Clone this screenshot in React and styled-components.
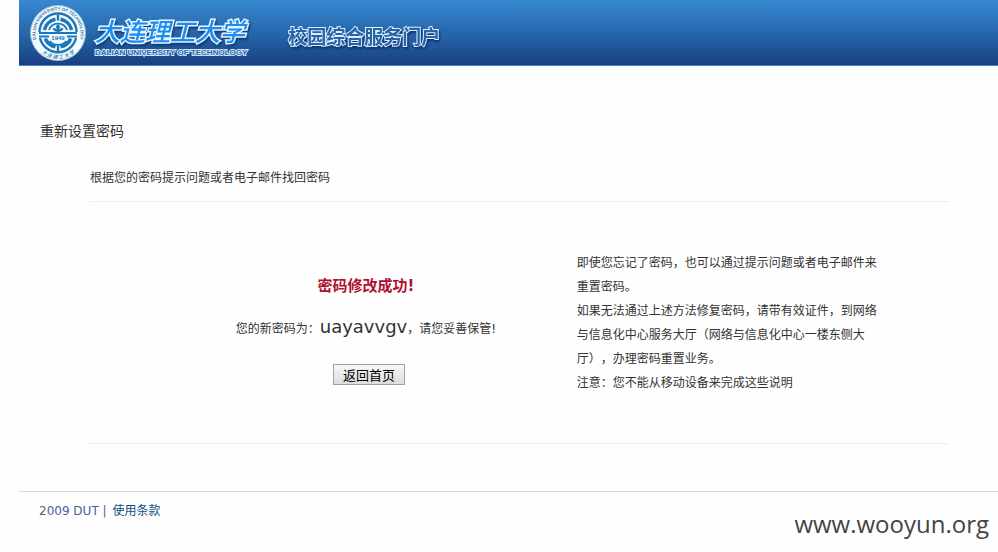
import styled, { createGlobalStyle } from 'styled-components';

const GlobalStyle = createGlobalStyle`
  body {
    margin: 0;
    background: #fefefe;
    color: #333;
    font-family: 'DejaVu Sans', 'Noto Sans CJK SC', sans-serif;
    font-size: 12px;
    line-height: 24px;
    text-spacing-trim: space-all;
  }
`;

const Page = styled.div`
  margin-left: 19px;
`;

const Header = styled.header`
  display: flex;
  align-items: center;
  height: 65px;
  padding-left: 10px;
  background: linear-gradient(#3788d0, #2767ac 50%, #193f82);
  border-bottom: 1px solid #4a86bd;
`;

const Emblem = styled.svg`
  display: block;
  width: 58px;
  height: 58px;
  flex: none;
`;

const School = styled.div`
  margin-left: 8px;
  padding-top: 6px;
  white-space: nowrap;
`;

const SchoolName = styled.div`
  color: #1b8cf0;
  font: italic 500 25px/34px 'Noto Sans CJK SC', sans-serif;
  -webkit-text-stroke: 3px #e4f4ff;
  paint-order: stroke fill;
  filter: drop-shadow(1px 2px 1px #123a70);
`;

const SchoolNameEn = styled.div`
  color: #2a66ab;
  font: bold 8px/12px 'Liberation Sans', Arial, sans-serif;
  -webkit-text-stroke: 2px #d3e8f8;
  paint-order: stroke fill;
`;

const PortalName = styled.div`
  margin-left: 41px;
  padding-top: 6px;
  color: #2b64a6;
  font: bold 19px/28px 'Noto Sans CJK SC', sans-serif;
  -webkit-text-stroke: 2px #d8efff;
  paint-order: stroke fill;
  filter: drop-shadow(1px 2px 1px #12336b);
  white-space: nowrap;
`;

const Main = styled.main`
  padding: 53px 49px 47px 71px;
`;

const Title = styled.h1`
  margin: 0 0 23px -50px;
  font-size: 14px;
  font-weight: normal;
  line-height: 24px;
`;

const Subtitle = styled.p`
  margin: 0;
  padding-bottom: 11px;
  border-bottom: 1px solid #eee;
`;

const Columns = styled.div`
  display: grid;
  grid-template-columns: 17fr 13fr;
  padding: 49px 0 48px;
  border-bottom: 1px solid #eee;
`;

const Result = styled.section`
  padding: 23px 0 0 65px;
  text-align: center;
`;

const Success = styled.h2`
  margin: 0 0 17px;
  color: #b01030;
  font-size: 15px;
  line-height: 24px;
`;

const NewPassword = styled.p`
  margin: 0 0 23px;
`;

const Password = styled.span`
  font-size: 18px;
`;

const BackButton = styled.button`
  height: 21px;
  margin-left: 6px;
  padding: 0 9px;
  border: 1px solid #a0a0a0;
  border-radius: 0;
  background: linear-gradient(#f8f8f8, #dcdcdc);
  color: #000;
  font: 13px/17px 'Noto Sans CJK SC', sans-serif;
  vertical-align: top;
`;

const Help = styled.section`
  max-width: 305px;
`;

const HelpText = styled.p`
  margin: 0;
`;

const Footer = styled.footer`
  display: flex;
  justify-content: space-between;
  align-items: flex-start;
  padding: 7px 9px 0 20px;
  border-top: 1px solid #d8d8dc;
  color: #4b6098;
`;

const TermsLink = styled.a`
  margin-left: 2px;
  color: #0b4f82;
  text-decoration: none;
`;

const Site = styled.div`
  padding-top: 7px;
  color: #444;
  font: 24px/36px 'Open Sans', 'Noto Sans', sans-serif;
`;

const SchoolEmblem = () => (
  <Emblem viewBox="-29 -29 58 58" aria-hidden="true">
    <defs>
      <path id="ring-top" d="M-19.4 11.5A22.6 22.6 0 1 1 19.4 11.5" />
      <path id="ring-bottom" d="M-23 11.5A25.7 25.7 0 0 0 23 11.5" />
    </defs>
    <circle r="27.5" fill="#f3fbff" stroke="#8dc4e8" strokeWidth="1" />
    <text
      fill="#3d7399"
      fontFamily="Liberation Sans"
      fontWeight="bold"
      fontSize="4.4"
    >
      <textPath href="#ring-top" startOffset="50%" textAnchor="middle">
        DALIAN UNIVERSITY OF TECHNOLOGY
      </textPath>
    </text>
    <text
      fill="#3d7399"
      fontFamily="Noto Sans CJK SC"
      fontStyle="italic"
      fontWeight="500"
      fontSize="5"
    >
      <textPath href="#ring-bottom" startOffset="50%" textAnchor="middle">
        大 连 理 工 大 学
      </textPath>
    </text>
    <g fill="none" stroke="#1b78b8">
      <path
        d="M-18.5 -1A18.5 18.5 0 0 1 18.5 -1M-18 5A18.5 18.5 0 0 0 18 5"
        strokeWidth="2.4"
      />
      <path
        d="M-13.6 -3A14 14 0 0 1 -2.5 -13.8M13.6 -3A14 14 0 0 0 2.5 -13.8M-12.8 5.5A14 14 0 0 0 -2.5 13.8M12.8 5.5A14 14 0 0 1 2.5 13.8"
        strokeWidth="3.6"
      />
      <path
        d="M-9 -3A9.5 9.5 0 0 1 9 -3M-8.4 8A11 11 0 0 0 8.4 8"
        strokeWidth="1.8"
      />
      <path d="M0 -18V-12.5M0 12.5V18" strokeWidth="2.4" />
      <path d="M-19 0H19M-19 3.6H-9M9 3.6H19" strokeWidth="2" />
    </g>
    <path
      d="M0 -9L2.2 -6.5L1 -3.5Q3 -6 5.6 -4.5Q4 -1 1 -1.4V0H-1V-1.4Q-4 -1 -5.6 -4.5Q-3 -6 -1 -3.5L-2.2 -6.5Z"
      fill="#1b78b8"
    />
    <text
      y="7.4"
      textAnchor="middle"
      fill="#1b78b8"
      fontFamily="Liberation Sans"
      fontWeight="bold"
      fontSize="6"
    >
      1949
    </text>
  </Emblem>
);

const App = () => (
  <Page>
    <GlobalStyle />
    <Header>
      <SchoolEmblem />
      <School>
        <SchoolName>大连理工大学</SchoolName>
        <SchoolNameEn>DALIAN UNIVERSITY OF TECHNOLOGY</SchoolNameEn>
      </School>
      <PortalName>校园综合服务门户</PortalName>
    </Header>
    <Main>
      <Title>重新设置密码</Title>
      <Subtitle>根据您的密码提示问题或者电子邮件找回密码</Subtitle>
      <Columns>
        <Result>
          <Success>密码修改成功!</Success>
          <NewPassword>
            您的新密码为：<Password>uayavvgv</Password>，请您妥善保管!
          </NewPassword>
          <BackButton type="button">返回首页</BackButton>
        </Result>
        <Help>
          <HelpText>
            即使您忘记了密码，也可以通过提示问题或者电子邮件来重置密码。
          </HelpText>
          <HelpText>
            如果无法通过上述方法修复密码，请带有效证件，到网络与信息化中心服务大厅（网络与信息化中心一楼东侧大厅），办理密码重置业务。
          </HelpText>
          <HelpText>注意：您不能从移动设备来完成这些说明</HelpText>
        </Help>
      </Columns>
    </Main>
    <Footer>
      <div>
        2009 DUT | <TermsLink href="#terms">使用条款</TermsLink>
      </div>
      <Site>www.wooyun.org</Site>
    </Footer>
  </Page>
);

export default App;
